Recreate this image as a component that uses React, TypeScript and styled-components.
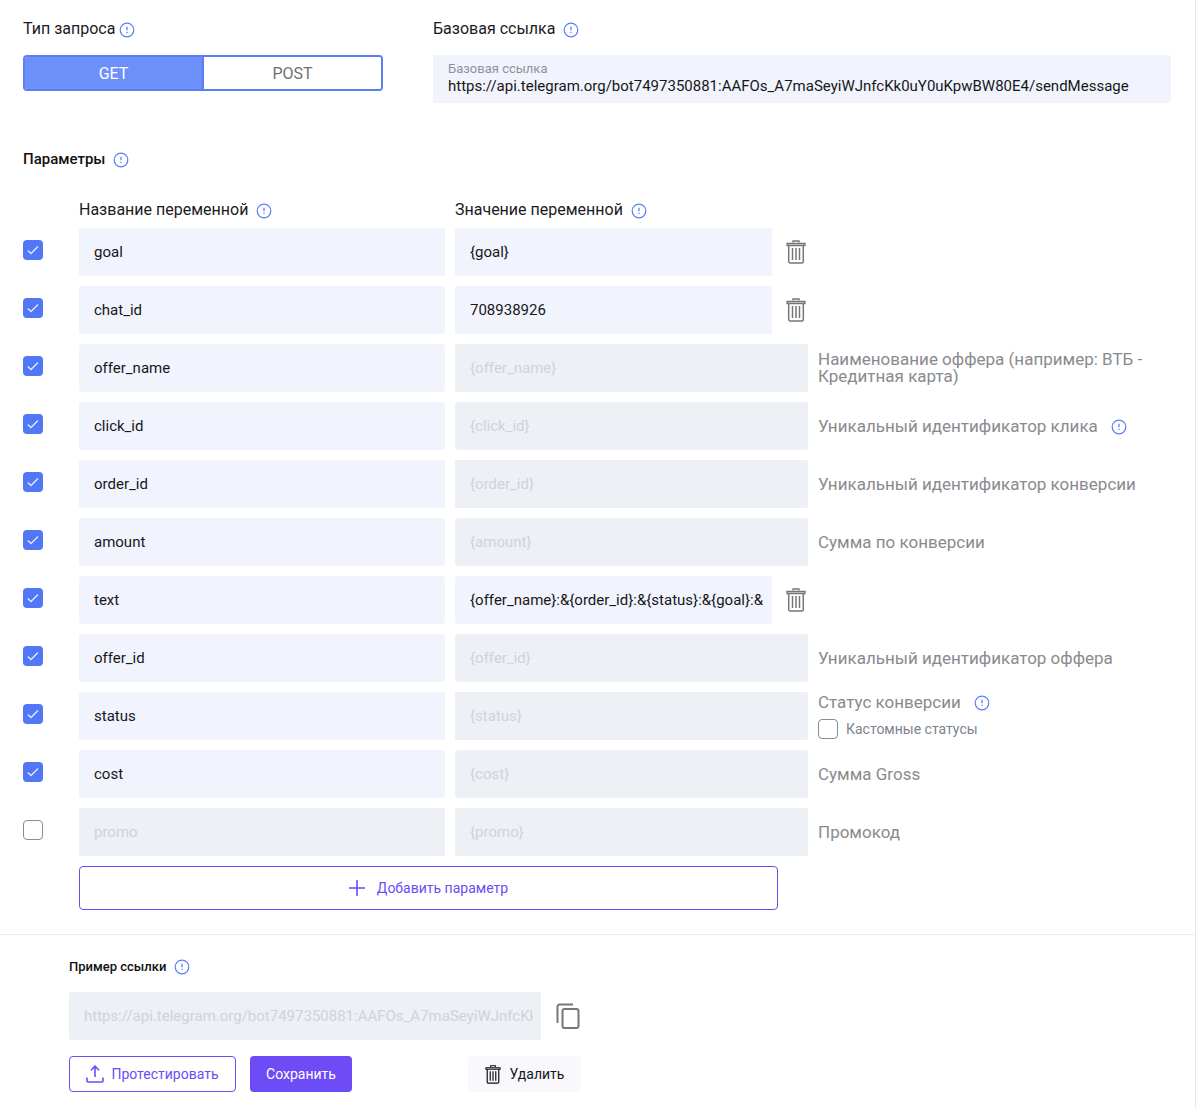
import React from 'react';
import styled, { createGlobalStyle } from 'styled-components';

const GlobalStyle = createGlobalStyle`
  html, body {
    margin: 0;
    padding: 0;
    background: #fff;
    font-family: Roboto, "Liberation Sans", sans-serif;
  }
`;

const Page = styled.div`
  width: 1196px;
  height: 1108px;
  box-sizing: border-box;
  border-right: 1px solid #e6e6ea;
  overflow: hidden;
`;

const Top = styled.div`
  display: flex;
  padding: 20px 0 0 23px;
`;

const TypeColumn = styled.div`
  width: 410px;
`;

const BaseColumn = styled.div`
  width: 738px;
`;

const Label = styled.div<{ $gap?: number }>`
  display: flex;
  align-items: center;
  height: 18px;
  gap: ${(p) => p.$gap ?? 4}px;
  font-size: 16px;
  line-height: 18px;
  color: #1b1b1f;
  white-space: nowrap;
`;

const Toggle = styled.div`
  display: flex;
  width: 360px;
  height: 36px;
  margin-top: 17px;
  box-sizing: border-box;
  border: 2px solid #5a7ff5;
  border-radius: 4px;
  overflow: hidden;
`;

const ToggleOption = styled.div<{ $active?: boolean }>`
  flex: 1;
  display: flex;
  align-items: center;
  justify-content: center;
  font-size: 16px;
  background: ${(p) => (p.$active ? '#6c8ffa' : '#fff')};
  color: ${(p) => (p.$active ? '#fff' : '#6f6f73')};
  border-left: ${(p) => (p.$active ? '0' : '2px solid #5a7ff5')};
`;

const BaseField = styled.div`
  height: 48px;
  margin-top: 17px;
  box-sizing: border-box;
  padding: 7px 15px 0;
  background: #f1f4fd;
  border-radius: 2px;
`;

const BaseCaption = styled.div`
  font-size: 13px;
  line-height: 13px;
  color: #8e929a;
`;

const BaseValue = styled.div`
  margin-top: 2px;
  font-size: 15px;
  line-height: 19px;
  color: #17171a;
  white-space: nowrap;
`;

const SectionTitle = styled.div`
  display: flex;
  align-items: center;
  gap: 8px;
  margin: 47px 0 0 23px;
  height: 18px;
  font-size: 15px;
  font-weight: 500;
  color: #111;
`;

const Params = styled.div`
  margin: 33px 0 0 23px;
`;

const Heads = styled.div`
  display: flex;
  padding-left: 56px;
  height: 18px;
`;

const NameHead = styled.div`
  width: 376px;
`;

const Rows = styled.div`
  display: flex;
  flex-direction: column;
  gap: 10px;
  margin-top: 9px;
`;

const Row = styled.div`
  display: flex;
  align-items: center;
  height: 48px;
`;

const Check = styled.div<{ $on?: boolean }>`
  flex: none;
  width: 20px;
  height: 20px;
  box-sizing: border-box;
  display: flex;
  align-items: center;
  justify-content: center;
  border-radius: 4px;
  background: ${(p) => (p.$on ? '#5078f6' : '#fff')};
  border: ${(p) => (p.$on ? '0' : '1px solid #868c9c')};
`;

const RowCheck = styled(Check)`
  margin: -4px 36px 0 0;
`;

const Field = styled.div<{ $w: number; $off?: boolean }>`
  flex: none;
  width: ${(p) => p.$w}px;
  height: 48px;
  box-sizing: border-box;
  padding: 0 8px 0 15px;
  display: flex;
  align-items: center;
  border-radius: 2px;
  font-size: 15px;
  white-space: nowrap;
  background: ${(p) => (p.$off ? '#edf0f5' : '#f1f4fd')};
  color: ${(p) => (p.$off ? '#d0d3d9' : '#17171a')};
`;

const FieldText = styled.span`
  min-width: 0;
  overflow: hidden;
`;

const NameField = styled(Field)`
  margin-right: 10px;
`;

const TrashButton = styled.div`
  margin-left: 14px;
  display: flex;
`;

const Note = styled.div`
  margin-left: 10px;
  width: 340px;
  display: flex;
  align-items: center;
  gap: 13px;
  font-size: 17px;
  line-height: 17px;
  color: #8a8a8e;
`;

const StatusNote = styled.div`
  margin-left: 10px;
  display: flex;
  flex-direction: column;
  gap: 8px;
`;

const StatusLine = styled(Note)`
  margin-left: 0;
`;

const CustomLine = styled.div`
  display: flex;
  align-items: center;
  gap: 8px;
  font-size: 14px;
  color: #7d8291;
`;

const AddButton = styled.div`
  width: 699px;
  height: 44px;
  margin: 10px 0 0 56px;
  box-sizing: border-box;
  border: 1px solid #6d4bf5;
  border-radius: 4px;
  display: flex;
  align-items: center;
  justify-content: center;
  gap: 12px;
  font-size: 14px;
  color: #6d4bf5;
`;

const Divider = styled.div`
  height: 1px;
  margin-top: 24px;
  background: #ecedf3;
`;

const Footer = styled.div`
  padding: 22px 0 0 69px;
`;

const ExampleTitle = styled.div`
  display: flex;
  align-items: center;
  gap: 8px;
  height: 18px;
  font-size: 13px;
  font-weight: 500;
  color: #111;
`;

const ExampleRow = styled.div`
  display: flex;
  align-items: center;
  gap: 15px;
  margin-top: 17px;
`;

const Actions = styled.div`
  display: flex;
  margin-top: 16px;
`;

const TestButton = styled.div`
  width: 167px;
  height: 36px;
  box-sizing: border-box;
  border: 1px solid #6d4bf5;
  border-radius: 4px;
  display: flex;
  align-items: center;
  justify-content: center;
  gap: 7px;
  font-size: 14px;
  color: #6d4bf5;
`;

const SaveButton = styled.div`
  width: 102px;
  height: 36px;
  margin-left: 14px;
  border-radius: 4px;
  background: #6d4bf5;
  display: flex;
  align-items: center;
  justify-content: center;
  font-size: 14px;
  color: #fff;
`;

const DeleteButton = styled.div`
  width: 113px;
  height: 36px;
  margin-left: 116px;
  border-radius: 4px;
  background: #f9f9fd;
  display: flex;
  align-items: center;
  justify-content: center;
  gap: 9px;
  font-size: 14px;
  color: #17171a;
`;

function Info() {
  return (
    <svg width="16" height="16" viewBox="0 0 16 16" fill="none" style={{ flex: 'none', marginTop: 1 }}>
      <circle cx="8" cy="8" r="6.8" stroke="#5a7ff5" strokeWidth="1.2" />
      <path d="M8 4.800v3.400" stroke="#5a7ff5" strokeWidth="1.300" />
      <path d="M8 9.800v1.300" stroke="#5a7ff5" strokeWidth="1.300" />
    </svg>
  );
}

function Tick() {
  return (
    <svg width="14" height="14" viewBox="0 0 14 14" fill="none">
      <path d="M1.800 7.500 5 10.500 12 3.500" stroke="#e6ecff" strokeWidth="1.300" />
    </svg>
  );
}

function Trash({ color = '#77777a', width = 20, height = 24 }: { color?: string; width?: number; height?: number }) {
  return (
    <svg width={width} height={height} viewBox="0 0 20 24" fill="none" stroke={color}>
      <path d="M7 2.500V1h6v1.500" strokeWidth="1.400" />
      <path d="M1 3.500h18v2H1z" strokeWidth="1.300" />
      <path d="M2.700 5.500v16a1.500 1.500 0 0 0 1.500 1.500h11.600a1.500 1.500 0 0 0 1.500-1.500v-16" strokeWidth="1.500" />
      <path d="M6.500 8v12M10 8v12M13.500 8v12" strokeWidth="1.500" />
    </svg>
  );
}

function Copy() {
  return (
    <svg width="24" height="26" viewBox="0 0 24 26" fill="none" stroke="#77777a" strokeWidth="2">
      <path d="M17 1.500H3.500A2 2 0 0 0 1.500 3.500V20" />
      <rect x="6.500" y="6" width="16" height="19" rx="2" />
    </svg>
  );
}

function Plus() {
  return (
    <svg width="16" height="16" viewBox="0 0 16 16" stroke="#6d4bf5" strokeWidth="1.600">
      <path d="M8 0v16M0 8h16" />
    </svg>
  );
}

function Upload() {
  return (
    <svg width="18" height="18" viewBox="0 0 18 18" fill="none" stroke="#6d4bf5" strokeWidth="1.600">
      <path d="M9 12V1.500M5 5.200 9 1.200l4 4" />
      <path d="M1 12.500v3.500a1 1 0 0 0 1 1h14a1 1 0 0 0 1-1v-3.500" />
    </svg>
  );
}

type Param = {
  name: string;
  value: string;
  enabled?: boolean;
  custom?: boolean;
  note?: React.ReactNode;
  info?: boolean;
};

const params: Param[] = [
  { name: 'goal', value: '{goal}', enabled: true, custom: true },
  { name: 'chat_id', value: '708938926', enabled: true, custom: true },
  { name: 'offer_name', value: '{offer_name}', enabled: true, note: 'Наименование оффера (например: ВТБ - Кредитная карта)' },
  { name: 'click_id', value: '{click_id}', enabled: true, note: 'Уникальный идентификатор клика', info: true },
  { name: 'order_id', value: '{order_id}', enabled: true, note: 'Уникальный идентификатор конверсии' },
  { name: 'amount', value: '{amount}', enabled: true, note: 'Сумма по конверсии' },
  { name: 'text', value: '{offer_name}:&{order_id}:&{status}:&{goal}:&', enabled: true, custom: true },
  { name: 'offer_id', value: '{offer_id}', enabled: true, note: 'Уникальный идентификатор оффера' },
  { name: 'status', value: '{status}', enabled: true },
  { name: 'cost', value: '{cost}', enabled: true, note: 'Сумма Gross' },
  { name: 'promo', value: '{promo}', note: 'Промокод' },
];

function ParamRow({ param }: { param: Param }) {
  return (
    <Row>
      <RowCheck $on={param.enabled}>{param.enabled && <Tick />}</RowCheck>
      <NameField $w={366} $off={!param.enabled}>{param.name}</NameField>
      <Field $w={param.custom ? 317 : 353} $off={!param.custom}>
        <FieldText>{param.value}</FieldText>
      </Field>
      {param.custom && (
        <TrashButton>
          <Trash />
        </TrashButton>
      )}
      {param.note && (
        <Note>
          <span>{param.note}</span>
          {param.info && <Info />}
        </Note>
      )}
      {param.name === 'status' && (
        <StatusNote>
          <StatusLine>
            <span>Статус конверсии</span>
            <Info />
          </StatusLine>
          <CustomLine>
            <Check />
            Кастомные статусы
          </CustomLine>
        </StatusNote>
      )}
    </Row>
  );
}

export default function App() {
  return (
    <Page>
      <GlobalStyle />
      <Top>
        <TypeColumn>
          <Label>
            Тип запроса <Info />
          </Label>
          <Toggle>
            <ToggleOption $active>GET</ToggleOption>
            <ToggleOption>POST</ToggleOption>
          </Toggle>
        </TypeColumn>
        <BaseColumn>
          <Label $gap={8}>
            Базовая ссылка <Info />
          </Label>
          <BaseField>
            <BaseCaption>Базовая ссылка</BaseCaption>
            <BaseValue>https://api.telegram.org/bot7497350881:AAFOs_A7maSeyiWJnfcKk0uY0uKpwBW80E4/sendMessage</BaseValue>
          </BaseField>
        </BaseColumn>
      </Top>

      <SectionTitle>
        Параметры <Info />
      </SectionTitle>

      <Params>
        <Heads>
          <NameHead>
            <Label $gap={8}>
              Название переменной <Info />
            </Label>
          </NameHead>
          <Label $gap={8}>
            Значение переменной <Info />
          </Label>
        </Heads>
        <Rows>
          {params.map((p) => (
            <ParamRow key={p.name} param={p} />
          ))}
        </Rows>
        <AddButton>
          <Plus />
          Добавить параметр
        </AddButton>
      </Params>

      <Divider />

      <Footer>
        <ExampleTitle>
          Пример ссылки <Info />
        </ExampleTitle>
        <ExampleRow>
          <Field $w={472} $off>
            <FieldText>https://api.telegram.org/bot7497350881:AAFOs_A7maSeyiWJnfcKk0uY0uKpwBW80E4/sendMessage</FieldText>
          </Field>
          <Copy />
        </ExampleRow>
        <Actions>
          <TestButton>
            <Upload />
            Протестировать
          </TestButton>
          <SaveButton>Сохранить</SaveButton>
          <DeleteButton>
            <Trash color="#111" width={16} height={19} />
            Удалить
          </DeleteButton>
        </Actions>
      </Footer>
    </Page>
  );
}
